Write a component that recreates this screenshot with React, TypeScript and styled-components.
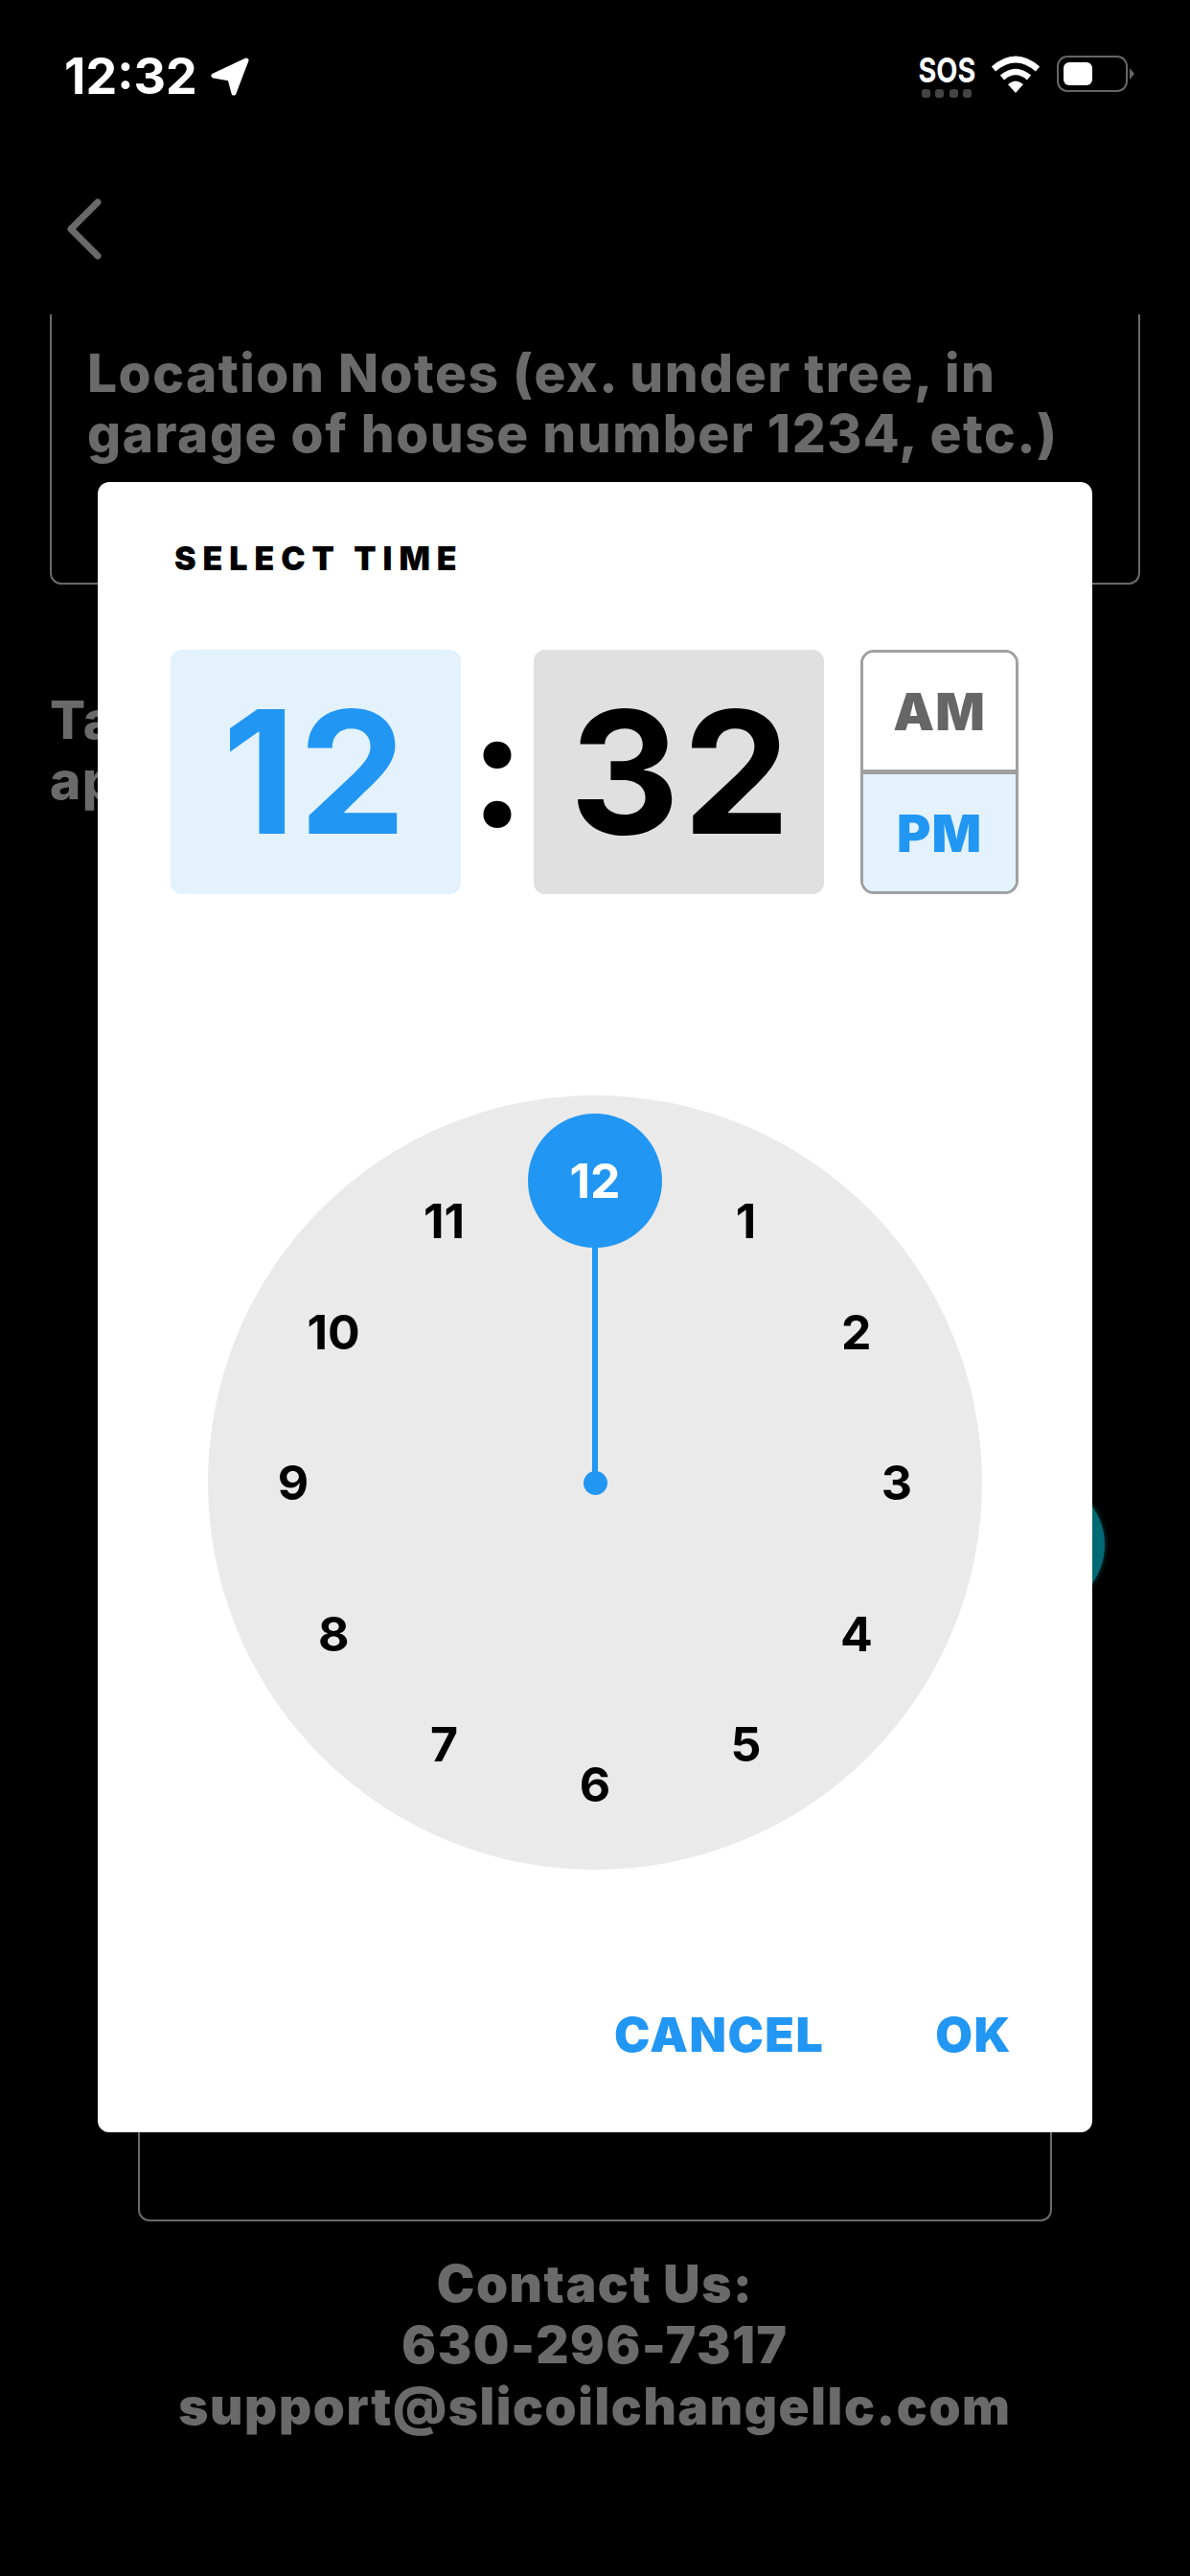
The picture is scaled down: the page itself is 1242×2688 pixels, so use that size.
import React from "react";
import styled, { createGlobalStyle } from "styled-components";

const GlobalStyle = createGlobalStyle`
  html, body {
    margin: 0;
    padding: 0;
    background: #000;
  }
  * {
    box-sizing: border-box;
  }
`;

const BLUE = "#2196f3";
const MUTED = "#6a6a6a";
const FONT = `Inter, "Liberation Sans", sans-serif`;

/* background page */

const Screen = styled.div`
  position: relative;
  width: 1242px;
  height: 2688px;
  overflow: hidden;
  background: #000;
  font-family: ${FONT};
`;

const StatusBar = styled.div`
  display: flex;
  justify-content: space-between;
  align-items: flex-start;
  height: 190px;
  padding: 54px 58px 0 67px;
`;

const StatusLeft = styled.div`
  display: flex;
  align-items: center;
  gap: 13px;
`;

const Clock12 = styled.div`
  font-size: 52px;
  line-height: 52px;
  font-weight: 700;
  color: #fff;
  width: 139px;
  white-space: nowrap;
`;

const StatusRight = styled.div`
  display: flex;
  align-items: flex-start;
  gap: 17px;
  padding-top: 4px;
`;

const SosWrap = styled.div`
  display: flex;
  flex-direction: column;
  align-items: center;
  width: 58px;
  gap: 5px;
`;

const SosText = styled.div`
  font-size: 36px;
  line-height: 30px;
  font-weight: 700;
  color: #fff;
  white-space: nowrap;
  transform: scaleX(0.8);
`;

const SosDots = styled.div`
  display: flex;
  gap: 5.5px;
`;

const SosDot = styled.span`
  width: 9px;
  height: 9px;
  border-radius: 3px;
  background: #444;
`;

const Battery = styled.div`
  display: flex;
  align-items: center;
  gap: 2px;
`;

const BatteryBody = styled.div`
  width: 74px;
  height: 38px;
  padding: 5px;
  border: 2.5px solid #666;
  border-radius: 11px;
`;

const BatteryFill = styled.div`
  width: 30px;
  height: 100%;
  background: #fff;
  border-radius: 6px;
`;

const BatteryNub = styled.div`
  width: 5px;
  height: 12px;
  background: #666;
  clip-path: polygon(0 0, 100% 50%, 0 100%);
`;

const BackRow = styled.div`
  height: 138px;
  padding-left: 68px;
  padding-top: 17px;
`;

const NotesBox = styled.div`
  width: 1138px;
  height: 282px;
  margin-left: 52px;
  padding: 30px 37px 0;
  border: 2px solid ${MUTED};
  border-top: none;
  border-radius: 0 0 12px 12px;
`;

const MutedText = styled.div`
  font-size: 55px;
  line-height: 63px;
  font-weight: 800;
  letter-spacing: 1.5px;
  color: ${MUTED};
  white-space: nowrap;
`;

const HintText = styled(MutedText)`
  margin: 110px 0 0 52px;
`;

const LowerBox = styled.div`
  width: 954px;
  height: 1106px;
  margin: 366px 0 0 144px;
  border: 2px solid ${MUTED};
  border-top: none;
  border-radius: 0 0 12px 12px;
`;

const Contact = styled.div`
  margin-top: 33px;
  text-align: center;
  font-size: 53px;
  line-height: 64px;
  font-weight: 900;
  letter-spacing: 1.6px;
  color: ${MUTED};
`;

const FloatingButton = styled.div`
  position: absolute;
  left: 1017px;
  top: 1544px;
  width: 136px;
  height: 136px;
  border-radius: 50%;
  background: #006a74;
  box-shadow: 0 0 4px 1px rgba(0, 106, 116, 0.5);
`;

/* time picker dialog */

const Dialog = styled.div`
  position: absolute;
  left: 102px;
  top: 503px;
  width: 1038px;
  height: 1722px;
  padding-top: 60px;
  background: #fff;
  border-radius: 12px;
  display: flex;
  flex-direction: column;
`;

const DialogTitle = styled.div`
  margin-left: 80px;
  font-size: 34px;
  line-height: 40px;
  font-weight: 900;
  letter-spacing: 6.9px;
  color: #000;
`;

const TimeRow = styled.div`
  display: flex;
  margin: 75px 0 0 76px;
`;

const TimeBox = styled.div<{ $active?: boolean }>`
  display: flex;
  align-items: center;
  justify-content: center;
  width: 303px;
  height: 255px;
  padding-left: ${(p) => (p.$active ? "0" : "5px")};
  border-radius: 12px;
  font-size: 178px;
  font-weight: 650;
  line-height: 1;
  letter-spacing: 3px;
  background: ${(p) => (p.$active ? "#e3f2fd" : "#e0e0e0")};
  color: ${(p) => (p.$active ? BLUE : "#000")};
`;

const Colon = styled.div`
  display: flex;
  align-items: center;
  justify-content: center;
  width: 76px;
  height: 255px;
  padding-bottom: 24px;
  font-family: Lato, sans-serif;
  font-size: 178px;
  font-weight: 900;
  line-height: 1;
  color: #000;
`;

const Meridiem = styled.div`
  display: flex;
  flex-direction: column;
  width: 165px;
  height: 255px;
  margin-left: 38px;
  border: 3px solid #a0a0a0;
  border-radius: 14px;
  overflow: hidden;
`;

const MeridiemOption = styled.div<{ $active?: boolean }>`
  flex: 1;
  display: flex;
  align-items: center;
  justify-content: center;
  font-size: 54px;
  font-weight: 900;
  letter-spacing: 1px;
  background: ${(p) => (p.$active ? "#e3f2fd" : "#fff")};
  color: ${(p) => (p.$active ? BLUE : "#666")};
  border-top: ${(p) => (p.$active ? "5px solid #a0a0a0" : "none")};
`;

const Face = styled.div`
  position: relative;
  width: 808px;
  height: 808px;
  margin: 210px auto 0;
  border-radius: 50%;
  background: #eaeaea;
`;

const Hand = styled.div`
  position: absolute;
  left: 401px;
  top: 89px;
  width: 6px;
  height: 315px;
  background: ${BLUE};
`;

const HandDot = styled.div`
  position: absolute;
  left: 391.5px;
  top: 391.5px;
  width: 25px;
  height: 25px;
  border-radius: 50%;
  background: ${BLUE};
`;

const SelectedDot = styled.div`
  position: absolute;
  left: 334px;
  top: 19px;
  width: 140px;
  height: 140px;
  border-radius: 50%;
  background: ${BLUE};
`;

const HourLabel = styled.div<{ $selected?: boolean }>`
  position: absolute;
  transform: translate(-50%, -50%);
  font-size: 50px;
  line-height: 60px;
  font-weight: 700;
  color: ${(p) => (p.$selected ? "#fff" : "#000")};
`;

const Actions = styled.div`
  display: flex;
  justify-content: flex-end;
  gap: 116px;
  margin-top: 142px;
  padding-right: 84px;
`;

const ActionButton = styled.div`
  font-size: 50px;
  line-height: 60px;
  font-weight: 900;
  letter-spacing: 1.5px;
  color: ${BLUE};
`;

const HOURS = [12, 1, 2, 3, 4, 5, 6, 7, 8, 9, 10, 11];

const App: React.FC = () => {
  return (
    <Screen>
      <GlobalStyle />

      {/* STATUS BAR */}
      <StatusBar>
        <StatusLeft>
          <Clock12>12:32</Clock12>
          <svg width="42" height="42" viewBox="0 0 42 42">
            <path
              d="M38 4 L4 20 L21 23 L25 38 Z"
              fill="#fff"
              stroke="#fff"
              strokeWidth="5"
              strokeLinejoin="round"
            />
          </svg>
        </StatusLeft>
        <StatusRight>
          <SosWrap>
            <SosText>SOS</SosText>
            <SosDots>
              <SosDot />
              <SosDot />
              <SosDot />
              <SosDot />
            </SosDots>
          </SosWrap>
          <svg width="52" height="40" viewBox="0 0 52 40">
            <path d="M3 14 Q26 -6 49 14" fill="none" stroke="#fff" strokeWidth="6.5" />
            <path d="M12 23 Q26 11 40 23" fill="none" stroke="#fff" strokeWidth="6.5" />
            <path d="M18 30 Q26 23 34 30 L26 39 Z" fill="#fff" />
          </svg>
          <Battery>
            <BatteryBody>
              <BatteryFill />
            </BatteryBody>
            <BatteryNub />
          </Battery>
        </StatusRight>
      </StatusBar>

      {/* BACKGROUND PAGE */}
      <BackRow>
        <svg width="40" height="64" viewBox="0 0 40 64">
          <path d="M34 4 L6 32 L34 60" fill="none" stroke={MUTED} strokeWidth="7" strokeLinecap="round" strokeLinejoin="round" />
        </svg>
      </BackRow>
      <NotesBox>
        <MutedText>
          Location Notes (ex. under tree, in
          <br />
          garage of house number 1234, etc.)
        </MutedText>
      </NotesBox>
      <HintText>
        Ta
        <br />
        ap
      </HintText>
      <LowerBox />
      <Contact>
        Contact Us:
        <br />
        630-296-7317
        <br />
        support@slicoilchangellc.com
      </Contact>
      <FloatingButton />

      {/* TIME PICKER */}
      <Dialog>
        <DialogTitle>SELECT TIME</DialogTitle>
        <TimeRow>
          <TimeBox $active>12</TimeBox>
          <Colon>:</Colon>
          <TimeBox>32</TimeBox>
          <Meridiem>
            <MeridiemOption>AM</MeridiemOption>
            <MeridiemOption $active>PM</MeridiemOption>
          </Meridiem>
        </TimeRow>
        <Face>
          <Hand />
          <HandDot />
          <SelectedDot />
          {HOURS.map((h, i) => {
            const angle = (i * Math.PI) / 6;
            return (
              <HourLabel
                key={h}
                $selected={h === 12}
                style={{ left: 404 + 315 * Math.sin(angle), top: 404 - 315 * Math.cos(angle) }}
              >
                {h}
              </HourLabel>
            );
          })}
        </Face>
        <Actions>
          <ActionButton>CANCEL</ActionButton>
          <ActionButton>OK</ActionButton>
        </Actions>
      </Dialog>
    </Screen>
  );
};

export default App;
